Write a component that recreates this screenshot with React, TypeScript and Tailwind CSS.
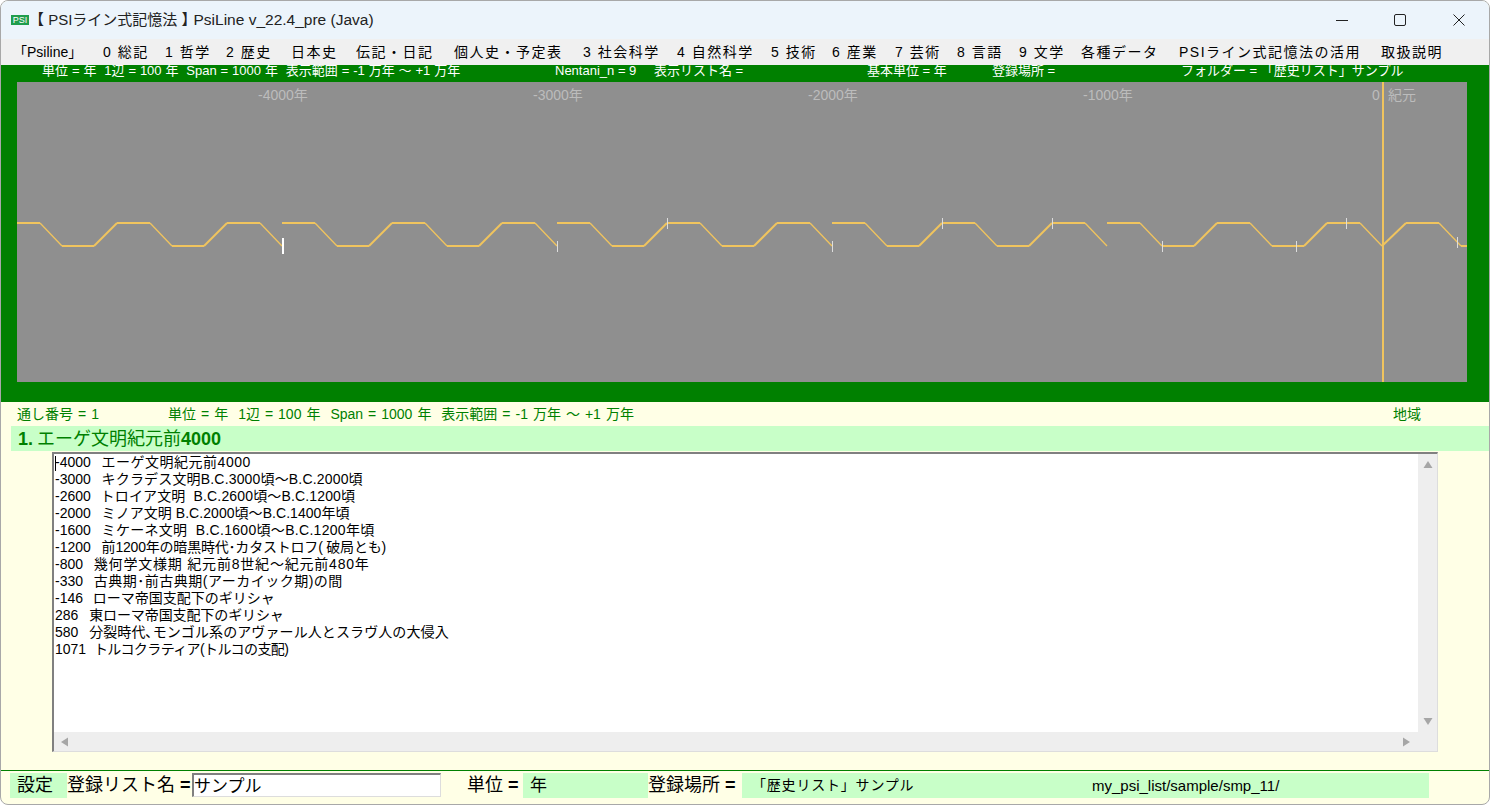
import React from "react";

const FONT = "font-['Liberation_Sans','Noto_Sans_CJK_JP',sans-serif]";

const menu: [string, string][] = [
  ["「Psiline」", "w-[90px] tracking-normal"],
  ["0 総記", "w-[62px]"],
  ["1 哲学", "w-[61px]"],
  ["2 歴史", "w-[65px]"],
  ["日本史", "w-[65px]"],
  ["伝記・日記", "w-[98px]"],
  ["個人史・予定表", "w-[129px]"],
  ["3 社会科学", "w-[94px]"],
  ["4 自然科学", "w-[94px]"],
  ["5 技術", "w-[61px]"],
  ["6 産業", "w-[63px]"],
  ["7 芸術", "w-[62px]"],
  ["8 言語", "w-[62px]"],
  ["9 文学", "w-[62px]"],
  ["各種データ", "w-[98px]"],
  ["PSIライン式記憶法の活用", "w-[202px]"],
  ["取扱説明", "w-[70px]"],
];

const lines: [string, string, string][] = [
  ["-4000", "エーゲ文明紀元前4000", "ml-[3px] tracking-[0.5px]"],
  ["-3000", "キクラデス文明B.C.3000頃～B.C.2000頃", "ml-[3px] tracking-[0.17px]"],
  ["-2600", "トロイア文明  B.C.2600頃～B.C.1200頃", "ml-[2px] tracking-[0.15px]"],
  ["-2000", "ミノア文明 B.C.2000頃～B.C.1400年頃", "ml-[3px] tracking-[0.05px]"],
  ["-1600", "ミケーネ文明  B.C.1600頃～B.C.1200年頃", "ml-[3px] tracking-[0.3px]"],
  ["-1200", "前1200年の暗黒時代･カタストロフ( 破局とも)", "ml-[3px] tracking-[-0.2px]"],
  ["-800", "幾何学文様期 紀元前8世紀～紀元前480年", "ml-[3px] tracking-[0.8px]"],
  ["-330", "古典期･前古典期(アーカイック期)の間", "ml-[3px] tracking-[0.5px]"],
  ["-146", "ローマ帝国支配下のギリシャ", "ml-[2px] tracking-[0px]"],
  ["286", "東ローマ帝国支配下のギリシャ", "ml-[3px] tracking-[-0.1px]"],
  ["580", "分裂時代､モンゴル系のアヴァール人とスラヴ人の大侵入", "ml-[3px] tracking-[0.1px]"],
  ["1071", "トルコクラティア(トルコの支配)", "ml-[0px] tracking-[-0.6px]"],
];

const WAVE = "#f0c45e";
const legs: [number, number, number, number][] = [];
for (const s of [7, 282, 557, 832, 1107]) {
  const p: [number, number][] = [[s, 223], [s + 33, 223], [s + 55, 246], [s + 87, 246], [s + 110, 223], [s + 143, 223], [s + 165, 246], [s + 197, 246], [s + 220, 223], [s + 253, 223], [s + 275, 246]];
  for (let i = 0; i < p.length - 1; i++) legs.push([p[i][0], p[i][1], p[i + 1][0], p[i + 1][1]]);
}
legs.push([1382, 246, 1406, 223], [1406, 223, 1439, 223], [1439, 223, 1461, 246], [1461, 246, 1467, 246]);

const ticks: [number, number, number][] = [[557, 241, 252], [667, 218, 229], [832, 241, 252], [942, 218, 229], [1052, 218, 229], [1162, 241, 252], [1296, 241, 252], [1346, 218, 229], [1457, 237, 248]];

function Wave() {
  return (
    <svg className="absolute inset-0" width="1450" height="300" viewBox="17 82 1450 300">
      {legs.map(([a, b, c, d], i) => (
        <line key={i} x1={a} y1={b} x2={c} y2={d} stroke={WAVE} strokeWidth={d > b ? 1.3 : 2} />
      ))}
      <rect x="1382" y="82" width="2" height="300" fill={WAVE} />
      {ticks.map(([x, a, b], i) => (
        <rect key={i} x={x} y={a} width="1" height={b - a} fill="#dddddd" />
      ))}
      <rect x="282" y="238" width="2" height="16" fill="#ffffff" />
    </svg>
  );
}

function Tri({ d }: { d: string }) {
  return (
    <svg width="10" height="10" viewBox="0 0 10 10" className="shrink-0">
      <path d={d} fill="#a6a6a6" />
    </svg>
  );
}

export default function App() {
  return (
    <div className={`${FONT} flex h-[805px] w-[1490px] flex-col overflow-hidden rounded-[8px] border border-[#a8a8a8] bg-[#ffffe6] text-black`}>
      {/* title bar */}
      <div className="flex h-[38px] shrink-0 items-center bg-[#ecf4fb]">
        <div className="ml-[10px] flex h-[10px] w-[18px] items-center justify-center bg-[#1f9d4d] text-[9px] leading-none text-white">PSI</div>
        <div className="whitespace-pre text-[15px] text-[#222222]">
          <span>【 PSIライン式記憶法 】</span>
          <span className="ml-[-3px] text-[15.5px]">PsiLine v_22.4_pre (Java)</span>
        </div>
        <div className="ml-auto flex items-center">
          <svg width="14" height="14" viewBox="0 0 14 14" className="mr-[44px]"><path d="M1 7.5H13" stroke="#222" strokeWidth="1" /></svg>
          <svg width="14" height="14" viewBox="0 0 14 14" className="mr-[45px]"><rect x="1.5" y="1.5" width="11" height="11" rx="1.5" fill="none" stroke="#222" strokeWidth="1" /></svg>
          <svg width="14" height="14" viewBox="0 0 14 14" className="mr-[23px]"><path d="M1.5 1.5L12.5 12.5M12.5 1.5L1.5 12.5" stroke="#222" strokeWidth="1" /></svg>
        </div>
      </div>

      {/* menu */}
      <div className="flex h-[26px] shrink-0 items-center bg-[#f0f0f0] pl-[12px] text-[14px] tracking-[1.5px] text-black">
        {menu.map(([m, c]) => (
          <span key={m} className={`shrink-0 whitespace-pre ${c}`}>{m}</span>
        ))}
      </div>

      {/* green chart area */}
      <div className="flex h-[337px] shrink-0 flex-col bg-[#008000]">
        <div className="flex h-[17px] items-start whitespace-pre pl-[41px] text-[13px] leading-[11px] text-white">
          <span className="w-[513px] [word-spacing:0.3px]">単位 = 年  1辺 = 100 年  Span = 1000 年  表示範囲 = -1 万年 ～ +1 万年</span>
          <span className="w-[99px]">Nentani_n = 9</span>
          <span className="w-[213px]">表示リスト名 =</span>
          <span className="w-[125px]">基本単位 = 年</span>
          <span className="w-[189px]">登録場所 =</span>
          <span>フォルダー = 「歴史リスト」サンプル</span>
        </div>
        <div className="relative ml-[16px] h-[300px] w-[1450px] bg-[#8f8f8f] text-[14px] leading-[16px] text-[#bcbcbc]">
          <Wave />
          <span className="absolute left-[241px] top-[5px]">-4000年</span>
          <span className="absolute left-[516px] top-[5px]">-3000年</span>
          <span className="absolute left-[791px] top-[5px]">-2000年</span>
          <span className="absolute left-[1066px] top-[5px]">-1000年</span>
          <span className="absolute left-[1355px] top-[5px]">0</span>
          <span className="absolute left-[1371px] top-[5px]">紀元</span>
        </div>
      </div>

      {/* info row */}
      <div className="flex h-[24px] shrink-0 items-center whitespace-pre pl-[16px] text-[14px] text-[#008000] [word-spacing:1.1px]">
        <span className="w-[151px]">通し番号 = 1</span>
        <span className="w-[1225px]">単位 = 年  1辺 = 100 年  Span = 1000 年  表示範囲 = -1 万年 ～ +1 万年</span>
        <span>地域</span>
      </div>

      {/* heading band */}
      <div className="ml-[10px] flex h-[25px] shrink-0 items-center bg-[#c8ffc8] pl-[7px] pt-[1px] text-[18px] text-[#008000]">
        <span className="font-bold">1.</span>
        <span className="ml-[4px]">エーゲ文明紀元前</span>
        <span className="font-bold">4000</span>
      </div>

      {/* list box */}
      <div className="ml-[51px] mt-[1px] flex h-[300px] w-[1386px] shrink-0 flex-col border-b border-l-2 border-r border-t-2 border-b-[#dddddd] border-l-[#808080] border-r-[#dddddd] border-t-[#808080] bg-[#eeeeee]">
        <div className="flex min-h-0 flex-1">
          <div className="relative flex-1 whitespace-pre bg-white pl-[1px] text-[14px] leading-[17px] text-black">
            <span className="absolute left-[1px] top-[2px] h-[15px] w-px bg-black" />
            {lines.map(([n, t, c]) => (
              <div key={n}>
                {n}
                {"  "}
                <span className={c}>{t}</span>
              </div>
            ))}
          </div>
          <div className="flex w-[19px] flex-col items-center justify-between py-[6px]">
            <Tri d="M5 1L9.5 8H.5Z" />
            <Tri d="M5 9L.5 2H9.5Z" />
          </div>
        </div>
        <div className="flex h-[19px] shrink-0 items-center justify-between pl-[5px] pr-[26px]">
          <Tri d="M2 5L9 .5V9.5Z" />
          <Tri d="M9 5L2 .5V9.5Z" />
        </div>
      </div>

      {/* bottom settings */}
      <div className="mt-[18px] flex h-[28px] shrink-0 items-end border-t border-[#008000] text-[18px] leading-[25px]">
        <div className="ml-[9px] flex h-[25px] items-stretch">
          <span className="w-[57px] bg-[#c8ffc8] pl-[7px]">設定</span>
          <span className="w-[125px] whitespace-pre">登録リスト名 <b className="font-bold">=</b></span>
          <input readOnly value="サンプル" className="h-[24px] w-[249px] border-b border-l-2 border-r border-t-2 border-b-[#dddddd] border-l-[#808080] border-r-[#dddddd] border-t-[#808080] bg-white pb-[2px] text-[17px] leading-[20px] outline-none" />
          <span className="w-[82px] whitespace-pre pl-[26px]">単位 <b className="font-bold">=</b></span>
          <span className="w-[125px] bg-[#c8ffc8] pl-[7px] text-[17px]">年</span>
          <span className="w-[94px] whitespace-pre">登録場所 <b className="font-bold">=</b></span>
          <div className="flex w-[687px] whitespace-pre bg-[#c8ffc8] pl-[10px]">
            <span className="w-[340px] text-[14px] tracking-[0.8px]">「歴史リスト」サンプル</span>
            <span className="text-[15px]">my_psi_list/sample/smp_11/</span>
          </div>
        </div>
      </div>
    </div>
  );
}
